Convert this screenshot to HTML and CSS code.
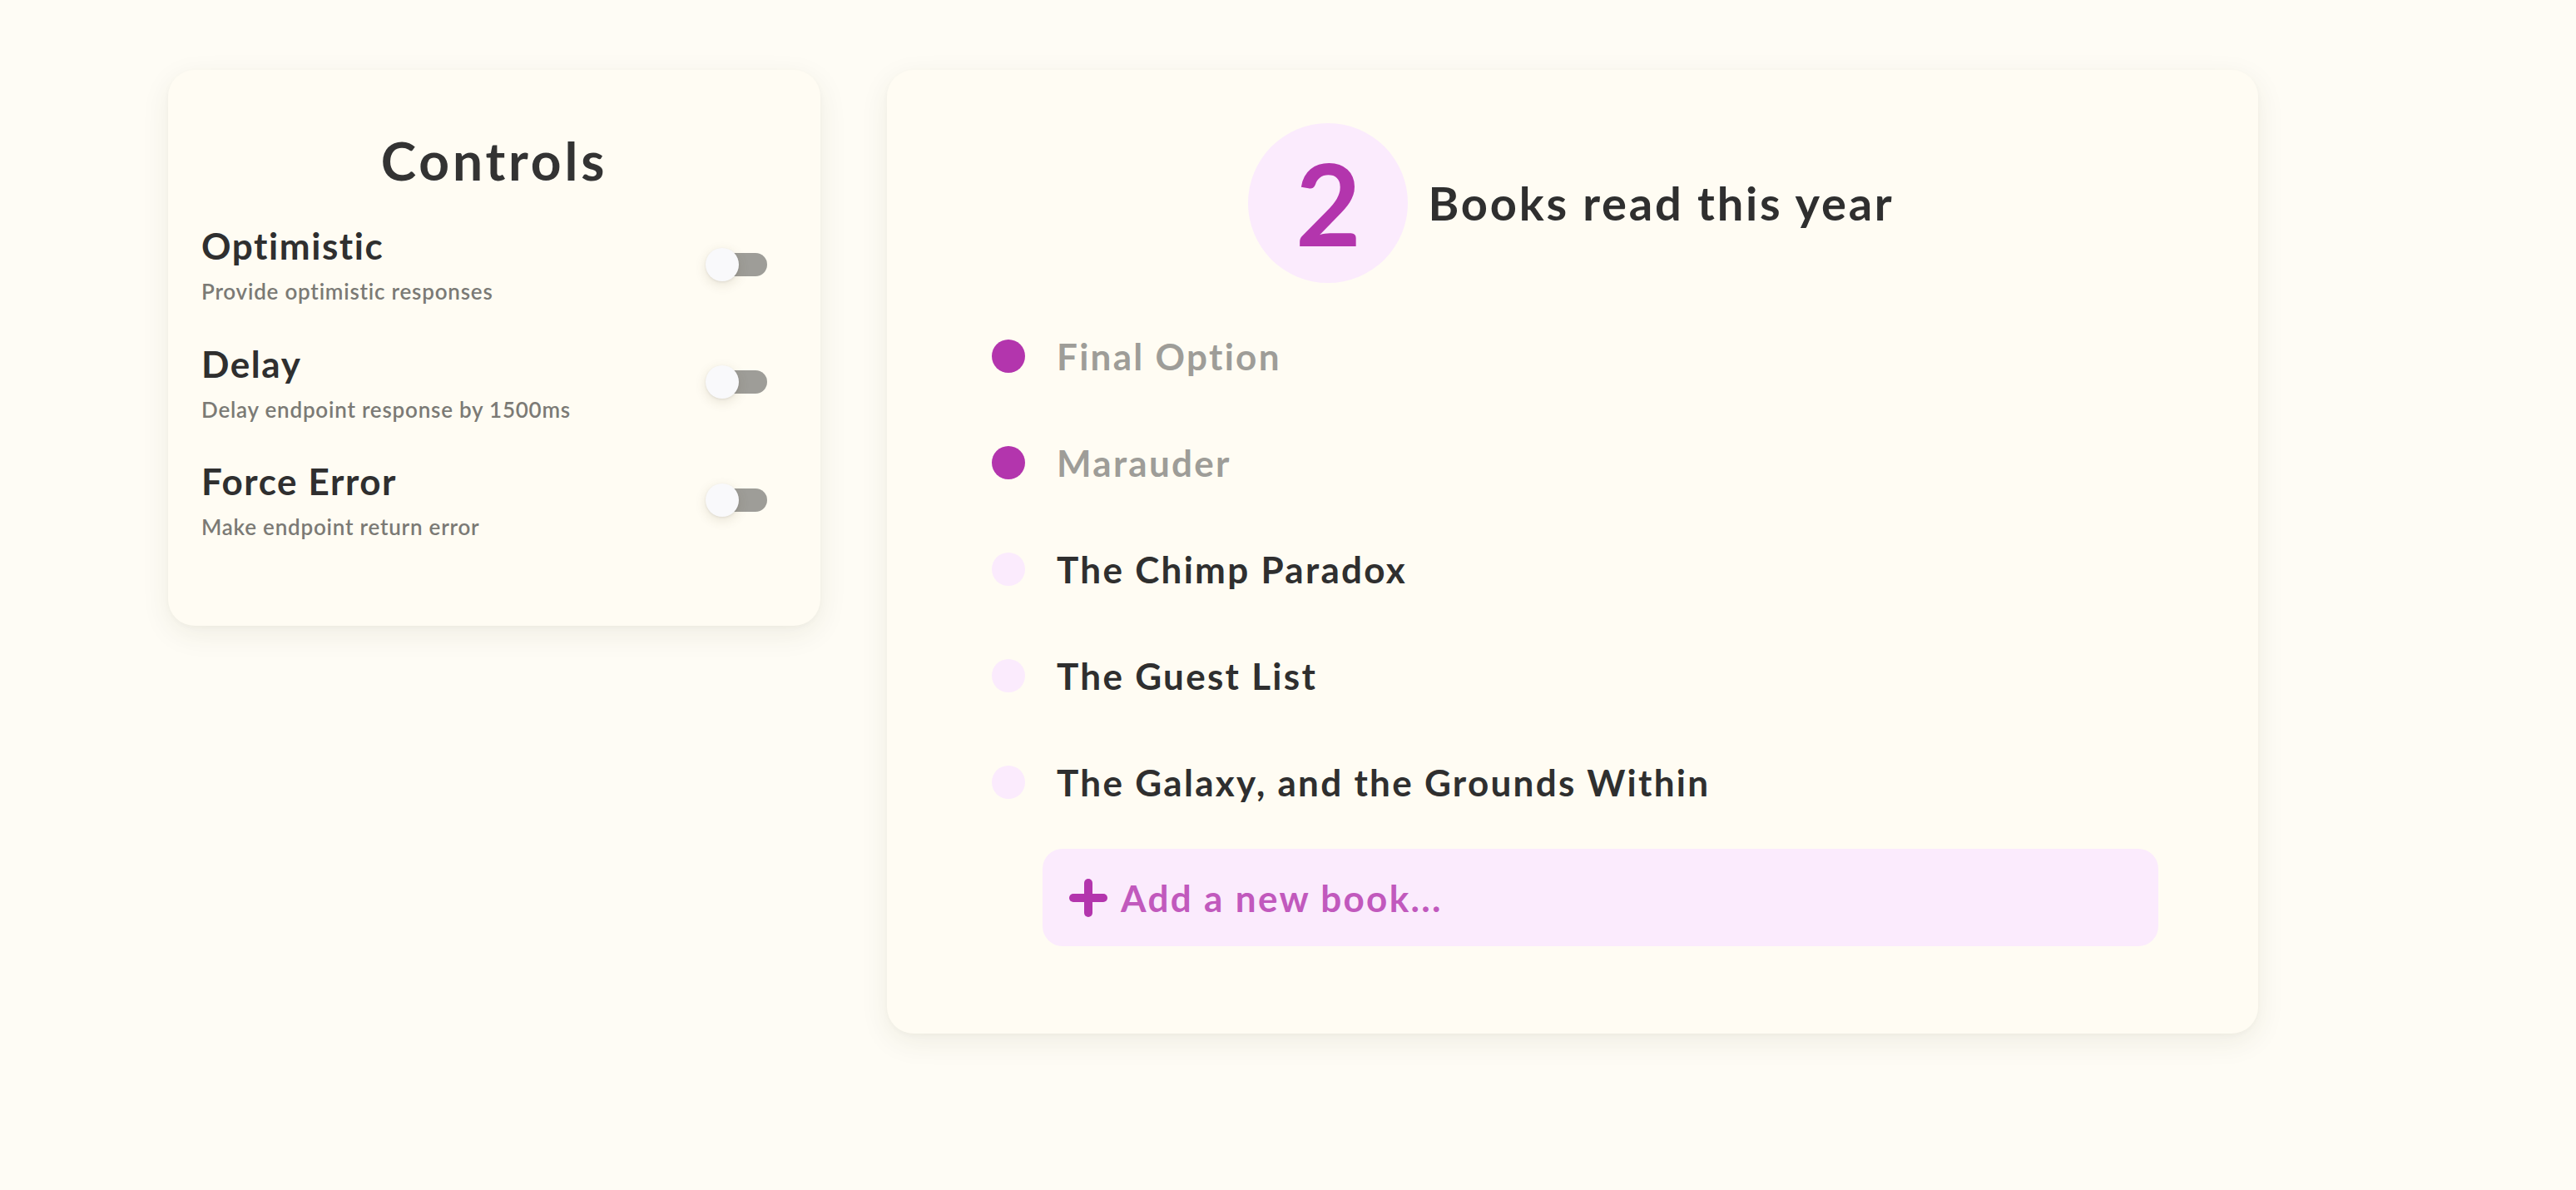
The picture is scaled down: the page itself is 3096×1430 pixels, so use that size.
FILE: index.html
```html
<!DOCTYPE html>
<html lang="en">
<head>
<meta charset="utf-8">
<title>Books</title>
<link rel="stylesheet" href="styles.css">
</head>
<body>
<div class="page">
  <section class="card controls">
    <h2 class="controls-title">Controls</h2>
    <div class="row">
      <div class="row-text">
        <div class="row-label">Optimistic</div>
        <div class="row-sub">Provide optimistic responses</div>
      </div>
      <span class="switch"><span class="track"></span><span class="thumb"></span></span>
    </div>
    <div class="row">
      <div class="row-text">
        <div class="row-label">Delay</div>
        <div class="row-sub">Delay endpoint response by 1500ms</div>
      </div>
      <span class="switch"><span class="track"></span><span class="thumb"></span></span>
    </div>
    <div class="row">
      <div class="row-text">
        <div class="row-label">Force Error</div>
        <div class="row-sub">Make endpoint return error</div>
      </div>
      <span class="switch"><span class="track"></span><span class="thumb"></span></span>
    </div>
  </section>

  <section class="card books">
    <div class="books-header">
      <div class="count">2</div>
      <div class="books-title">Books read this year</div>
    </div>
    <ul class="book-list">
      <li class="book done"><span class="dot"></span><span class="book-name">Final Option</span></li>
      <li class="book done"><span class="dot"></span><span class="book-name">Marauder</span></li>
      <li class="book"><span class="dot"></span><span class="book-name">The Chimp Paradox</span></li>
      <li class="book"><span class="dot"></span><span class="book-name">The Guest List</span></li>
      <li class="book"><span class="dot"></span><span class="book-name">The Galaxy, and the Grounds Within</span></li>
    </ul>
    <div class="add-book">
      <svg class="plus" width="46" height="46" viewBox="0 0 46 46" aria-hidden="true">
        <line x1="5" y1="23" x2="41" y2="23" stroke="#b335ad" stroke-width="10" stroke-linecap="round"/>
        <line x1="23" y1="5" x2="23" y2="41" stroke="#b335ad" stroke-width="10" stroke-linecap="round"/>
      </svg>
      <span class="add-text">Add a new book...</span>
    </div>
  </section>
</div>
</body>
</html>
```

FILE: styles.css
```css
html, body {
  margin: 0;
  padding: 0;
}

body {
  background: #fefcf5;
  font-family: Lato, "Noto Sans", "Open Sans", sans-serif;
  color: #333333;
  width: 3096px;
  height: 1430px;
  overflow: hidden;
}

.page {
  display: flex;
  align-items: flex-start;
  gap: 80px;
  padding: 84px 0 0 202px;
}

.card {
  background: #fffcf3;
  border-radius: 32px;
  box-sizing: border-box;
  box-shadow: 0 10px 34px rgba(70, 60, 30, 0.08), 0 2px 6px rgba(70, 60, 30, 0.03);
}

/* Controls card */
.controls {
  width: 784px;
  padding: 71px 40px 99px;
}

.controls-title {
  margin: 0 0 34px;
  font-size: 64px;
  line-height: 76px;
  font-weight: 700;
  letter-spacing: 0.06em;
  text-align: center;
  color: #333333;
}

.row {
  display: flex;
  align-items: center;
  justify-content: space-between;
}

.row + .row {
  margin-top: 36.5px;
}

.row-label {
  font-size: 44px;
  line-height: 60px;
  font-weight: 700;
  letter-spacing: 0.036em;
  color: #2f2f2f;
}

.row-sub {
  margin-top: 5px;
  font-size: 26px;
  line-height: 40px;
  font-weight: 600;
  letter-spacing: 0.03em;
  color: #7b7a75;
}

.switch {
  position: relative;
  width: 116px;
  height: 76px;
  flex: none;
}

.track {
  position: absolute;
  left: 24px;
  top: 24px;
  width: 68px;
  height: 28px;
  border-radius: 14px;
  background: #9e9d98;
}

.thumb {
  position: absolute;
  left: 18px;
  top: 18px;
  width: 40px;
  height: 40px;
  border-radius: 50%;
  background: #f9f9fb;
  box-shadow: 0 4px 14px rgba(90, 75, 40, 0.14), 0 1px 3px rgba(0, 0, 0, 0.08);
}

/* Books card */
.books {
  width: 1648px;
  padding: 64px 120px 105px 126px;
}

.books-header {
  display: flex;
  align-items: center;
  justify-content: center;
  gap: 24px;
  margin-left: -9px;
}

.count {
  width: 192px;
  height: 192px;
  border-radius: 50%;
  background: #fbebfd;
  color: #b335ad;
  display: flex;
  align-items: center;
  justify-content: center;
  font-size: 136px;
  line-height: 1;
  font-weight: 700;
}

.books-title {
  font-size: 56px;
  line-height: 68px;
  font-weight: 700;
  letter-spacing: 0.05em;
  color: #2f2f2f;
}

.book-list {
  list-style: none;
  margin: 24px 0 0;
  padding: 0;
}

.book {
  height: 128px;
  display: flex;
  align-items: center;
}

.dot {
  width: 40px;
  height: 40px;
  border-radius: 50%;
  background: #fbebfd;
  flex: none;
}

.book.done .dot {
  background: #b335ad;
}

.book-name {
  margin-left: 38px;
  font-size: 44px;
  line-height: 56px;
  font-weight: 700;
  letter-spacing: 0.052em;
  color: #2f2f2f;
}

.book.done .book-name {
  color: #9e9d98;
}

.add-book {
  margin: 16px 0 0 61px;
  height: 117px;
  border-radius: 24px;
  background: #fbebfd;
  display: flex;
  align-items: center;
  gap: 16px;
  padding-left: 32px;
}

.plus {
  flex: none;
  display: block;
}

.add-text {
  font-size: 44px;
  line-height: 56px;
  font-weight: 700;
  letter-spacing: 0.053em;
  color: #c159bd;
}
```
